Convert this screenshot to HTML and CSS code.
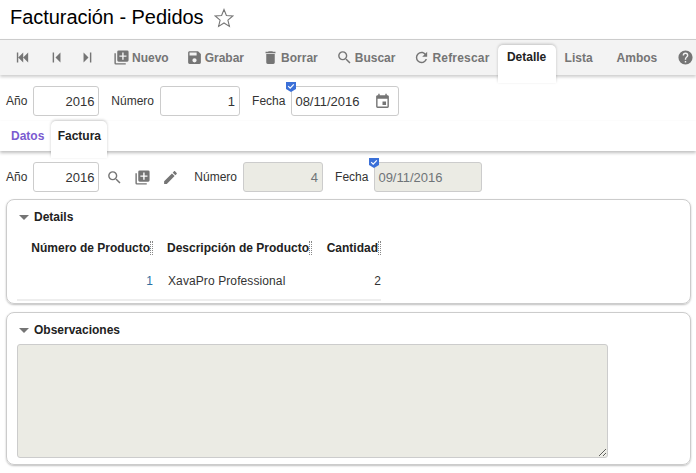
FILE: index.html
```html
<!DOCTYPE html>
<html lang="en">
<head>
    <meta charset="UTF-8">
    <title>Facturación - Pedidos</title>
    <link rel="stylesheet" href="styles.css">
</head>
<body>
    <svg class="sprites" xmlns="http://www.w3.org/2000/svg">
        <symbol id="i-first" viewBox="0 0 24 24"><path d="M20,5V19L13,12M6,5V19H4V5M13,5V19L6,12"/></symbol>
        <symbol id="i-prev" viewBox="0 0 24 24"><path d="M19,5V19L12,12L19,5M10,5V19H8V5H10Z"/></symbol>
        <symbol id="i-next" viewBox="0 0 24 24"><path d="M5,5V19L12,12M14,5V19H16V5"/></symbol>
        <symbol id="i-new" viewBox="0 0 24 24"><path d="M19,11H15V15H13V11H9V9H13V5H15V9H19M20,2H8A2,2 0 0,0 6,4V16A2,2 0 0,0 8,18H20A2,2 0 0,0 22,16V4A2,2 0 0,0 20,2M4,6H2V20A2,2 0 0,0 4,22H18V20H4V6Z"/></symbol>
        <symbol id="i-save" viewBox="0 0 24 24"><path d="M15,9H5V5H15M12,19A3,3 0 0,1 9,16A3,3 0 0,1 12,13A3,3 0 0,1 15,16A3,3 0 0,1 12,19M17,3H5C3.89,3 3,3.9 3,5V19A2,2 0 0,0 5,21H19A2,2 0 0,0 21,19V7L17,3Z"/></symbol>
        <symbol id="i-delete" viewBox="0 0 24 24"><path d="M19,4H15.5L14.5,3H9.5L8.5,4H5V6H19M6,19A2,2 0 0,0 8,21H16A2,2 0 0,0 18,19V7H6V19Z"/></symbol>
        <symbol id="i-search" viewBox="0 0 24 24"><path d="M9.5,3A6.5,6.5 0 0,1 16,9.5C16,11.11 15.41,12.59 14.44,13.73L14.71,14H15.5L20.5,19L19,20.5L14,15.5V14.71L13.73,14.44C12.59,15.41 11.11,16 9.5,16A6.5,6.5 0 0,1 3,9.5A6.5,6.5 0 0,1 9.5,3M9.5,5C7,5 5,7 5,9.5C5,12 7,14 9.5,14C12,14 14,12 14,9.5C14,7 12,5 9.5,5Z"/></symbol>
        <symbol id="i-refresh" viewBox="0 0 24 24"><path d="M17.65,6.35C16.2,4.9 14.21,4 12,4A8,8 0 0,0 4,12A8,8 0 0,0 12,20C15.73,20 18.84,17.45 19.73,14H17.65C16.83,16.33 14.61,18 12,18A6,6 0 0,1 6,12A6,6 0 0,1 12,6C13.66,6 15.14,6.69 16.22,7.78L13,11H20V4L17.65,6.35Z"/></symbol>
        <symbol id="i-help" viewBox="0 0 24 24"><path d="M15.07,11.25L14.17,12.17C13.45,12.89 13,13.5 13,15H11V14.5C11,13.39 11.45,12.39 12.17,11.67L13.41,10.41C13.78,10.05 14,9.55 14,9C14,7.89 13.1,7 12,7A2,2 0 0,0 10,9H8A4,4 0 0,1 12,5A4,4 0 0,1 16,9C16,9.88 15.64,10.67 15.07,11.25M13,19H11V17H13M12,2A10,10 0 0,0 2,12A10,10 0 0,0 12,22A10,10 0 0,0 22,12C22,6.47 17.5,2 12,2Z"/></symbol>
        <symbol id="i-calendar" viewBox="0 0 24 24"><path d="M19,19H5V8H19M16,1V3H8V1H6V3H5C3.89,3 3,3.89 3,5V19A2,2 0 0,0 5,21H19A2,2 0 0,0 21,19V5C21,3.89 20.1,3 19,3H18V1M17,12H12V17H17V12Z"/></symbol>
        <symbol id="i-pencil" viewBox="0 0 24 24"><path d="M20.71,7.04C21.1,6.65 21.1,6 20.71,5.63L18.37,3.29C18,2.9 17.35,2.9 16.96,3.29L15.12,5.12L18.87,8.87M3,17.25V21H6.75L17.81,9.93L14.06,6.18L3,17.25Z"/></symbol>
        <symbol id="i-badge" viewBox="0 0 10 10"><path class="badge-bg" d="M0,0H10V7L5,10L0,7Z"/><path class="badge-tick" d="M2.2,4.2L4.2,6.2L7.8,2.4"/></symbol>
    </svg>

    <div class="title-row">
        <h1 class="title">Facturación - Pedidos</h1>
        <svg class="star" viewBox="0 0 20 20"><path d="M10,1.5L12.4,7.5L18.8,8L13.9,12.1L15.4,18.4L10,15L4.6,18.4L6.1,12.1L1.2,8L7.6,7.5Z"/></svg>
    </div>

    <div class="toolbar">
        <a class="nav nav-first"><svg class="icon"><use href="#i-first"/></svg></a>
        <a class="nav nav-prev"><svg class="icon"><use href="#i-prev"/></svg></a>
        <a class="nav nav-next"><svg class="icon"><use href="#i-next"/></svg></a>
        <a class="action action-new"><svg class="icon"><use href="#i-new"/></svg>Nuevo</a>
        <a class="action action-save"><svg class="icon"><use href="#i-save"/></svg>Grabar</a>
        <a class="action action-delete"><svg class="icon"><use href="#i-delete"/></svg>Borrar</a>
        <a class="action action-search"><svg class="icon"><use href="#i-search"/></svg>Buscar</a>
        <a class="action action-refresh"><svg class="icon"><use href="#i-refresh"/></svg>Refrescar</a>
        <a class="mode mode-active">Detalle</a>
        <a class="mode mode-list">Lista</a>
        <a class="mode mode-both">Ambos</a>
        <svg class="icon help"><use href="#i-help"/></svg>
    </div>

    <div class="fields fields-main">
        <label class="lbl">Año</label>
        <div class="input num w-year">2016</div>
        <label class="lbl lbl-next">Número</label>
        <div class="input num w-num">1</div>
        <label class="lbl lbl-next">Fecha</label>
        <div class="input w-date">
            <svg class="badge"><use href="#i-badge"/></svg>
            <span>08/11/2016</span>
            <svg class="icon cal"><use href="#i-calendar"/></svg>
        </div>
    </div>

    <div class="tabs">
        <a class="tab">Datos</a>
        <a class="tab tab-active">Factura</a>
    </div>

    <div class="fields fields-invoice">
        <label class="lbl">Año</label>
        <div class="input num w-year">2016</div>
        <svg class="icon tool tool-first"><use href="#i-search"/></svg>
        <svg class="icon tool"><use href="#i-new"/></svg>
        <svg class="icon tool"><use href="#i-pencil"/></svg>
        <label class="lbl lbl-invoice">Número</label>
        <div class="input num w-num off">4</div>
        <label class="lbl lbl-next">Fecha</label>
        <div class="input w-date off">
            <svg class="badge"><use href="#i-badge"/></svg>
            <span>09/11/2016</span>
        </div>
    </div>

    <section class="card card-details">
        <h3 class="card-title"><i class="arrow"></i>Details</h3>
        <div class="grid">
            <div class="grid-head"><span class="col-num">Número de Producto</span><b class="grip"></b></div>
            <div class="grid-head"><span class="col-desc">Descripción de Producto</span><b class="grip"></b></div>
            <div class="grid-head"><span class="col-qty">Cantidad</span><b class="grip"></b></div>
            <div class="cell cell-num">1</div>
            <div class="cell">XavaPro Professional</div>
            <div class="cell cell-qty">2</div>
        </div>
    </section>

    <section class="card card-notes">
        <h3 class="card-title"><i class="arrow"></i>Observaciones</h3>
        <textarea class="notes" disabled></textarea>
    </section>
</body>
</html>
```

FILE: styles.css
```css
body {
    margin: 0;
    font-family: "Liberation Sans", Arial, sans-serif;
    font-size: 12px;
    color: #333;
    background: #fff;
    overflow: hidden;
    height: 473px;
}

.sprites {
    display: none;
}

.icon {
    width: 17px;
    height: 17px;
    fill: #757575;
    flex: none;
}

/* title */
.title-row {
    height: 39px;
    display: flex;
    align-items: center;
    padding: 0 0 4px 10px;
    box-sizing: border-box;
}

.title {
    margin: 0;
    font-size: 20px;
    font-weight: normal;
    color: #000;
    letter-spacing: -0.05px;
}

.star {
    width: 20px;
    height: 20px;
    margin-left: 10px;
    fill: none;
    stroke: #777;
    stroke-width: 1.1;
}

/* toolbar */
.toolbar {
    height: 36px;
    display: flex;
    align-items: center;
    background: #f3f3f3;
    border-top: 1px solid #ccc;
    box-sizing: border-box;
    box-shadow: 0 2px 3px rgba(0, 0, 0, 0.2);
    position: relative;
    font-weight: bold;
    color: #757575;
}

.nav, .action, .mode {
    display: flex;
    align-items: center;
}

.nav-first { margin-left: 14px; }
.nav-prev { margin-left: 16px; }
.nav-next { margin-left: 16px; }
.action-new { margin-left: 16px; }
.action-save { margin-left: 17px; }
.action-delete { margin-left: 18px; }
.action-search { margin-left: 18px; }
.action-refresh { margin-left: 18px; letter-spacing: 0.2px; }

.action .icon {
    margin-right: 2px;
}

.mode-active {
    align-self: flex-start;
    margin: 5px 0 0 8px;
    width: 58px;
    height: 38px;
    padding-bottom: 15px;
    box-sizing: border-box;
    justify-content: center;
    background: #fff;
    border-radius: 5px 5px 0 0;
    color: #222;
    box-shadow: 0 -1px 3px rgba(0, 0, 0, 0.2);
    z-index: 1;
}

.mode-list { margin-left: 9px; }
.mode-both { margin-left: 24px; }

.help {
    margin-left: 20px;
}

/* form rows */
.fields {
    display: flex;
    align-items: center;
    height: 30px;
}

.fields-main {
    margin-top: 11px;
    padding-left: 6px;
}

.fields-invoice {
    margin-top: 11px;
    padding-left: 6px;
}

.lbl {
    color: #333;
    margin-right: 6px;
}

.lbl-next {
    margin-left: 12px;
}

.lbl-invoice {
    margin-left: 15px;
}

.input {
    height: 30px;
    box-sizing: border-box;
    border: 1px solid #ccc;
    border-radius: 3px;
    font-size: 13px;
    color: #333;
    display: flex;
    align-items: center;
    padding: 0 4px;
    background: #fff;
    position: relative;
}

.num {
    justify-content: flex-end;
}

.w-year { width: 66px; }
.w-num { width: 80px; }
.w-date { width: 108px; padding-left: 3px; }

.off {
    background: #ebebe4;
    color: #6f7478;
}

.badge {
    position: absolute;
    left: -6px;
    top: -5px;
    width: 10px;
    height: 10px;
}

.badge-bg { fill: #3b70d8; }
.badge-tick { fill: none; stroke: #fff; stroke-width: 1.2; }

.cal {
    margin-left: auto;
    margin-right: 3px;
}

/* tabs */
.tabs {
    height: 30px;
    margin-top: 5px;
    display: flex;
    align-items: center;
    font-weight: bold;
    box-shadow: 0 2px 3px rgba(0, 0, 0, 0.25);
}

.tab {
    color: #7a5bd0;
    margin-left: 11px;
}

.tab-active {
    align-self: flex-start;
    width: 56px;
    height: 37px;
    margin-left: 7px;
    padding-top: 8px;
    box-sizing: border-box;
    text-align: center;
    color: #222;
    background: #fff;
    border-radius: 5px 5px 0 0;
    box-shadow: 0 -1px 3px rgba(0, 0, 0, 0.2);
}

.tool {
    margin-left: 11px;
}

.tool-first {
    margin-left: 7px;
}

/* cards */
.card {
    margin: 7px 5px 0 6px;
    border: 1px solid #ccc;
    border-radius: 8px;
    box-shadow: 0 1px 2px rgba(0, 0, 0, 0.25);
    padding: 0 10px;
    box-sizing: border-box;
}

.card-details { height: 105px; }
.card-notes { height: 153px; margin-top: 8px; }

.card-title {
    margin: 10px 0 0 2px;
    font-size: 12px;
    color: #222;
    display: flex;
    align-items: center;
    height: 14px;
}

.arrow {
    width: 0;
    height: 0;
    border: 5px solid transparent;
    border-top: 5px solid #757575;
    border-bottom: 0;
    margin-right: 5px;
}

.grid {
    display: grid;
    grid-template-columns: 136px 159px 69px;
    width: 364px;
    margin-top: 17px;
    padding-bottom: 11px;
    border-bottom: 2px solid #eee;
}

.grid-head {
    display: flex;
    justify-content: flex-end;
    font-weight: bold;
    color: #222;
    height: 14px;
    align-items: center;
}

.grip {
    width: 3px;
    height: 14px;
    margin-left: 0;
    border-left: 1px dotted #888;
    border-right: 1px dotted #888;
    box-sizing: border-box;
}

.cell {
    margin-top: 19px;
    padding-left: 15px;
    color: #333;
    letter-spacing: 0.1px;
}

.cell-num, .cell-qty {
    text-align: right;
    padding-left: 0;
}

.cell-num {
    color: #2f6f9f;
}

.notes {
    display: block;
    width: 591px;
    height: 114px;
    margin: 7px 0 0 0;
    box-sizing: border-box;
    background: #ebebe4;
    border: 1px solid #ccc;
    border-radius: 3px;
}
```
